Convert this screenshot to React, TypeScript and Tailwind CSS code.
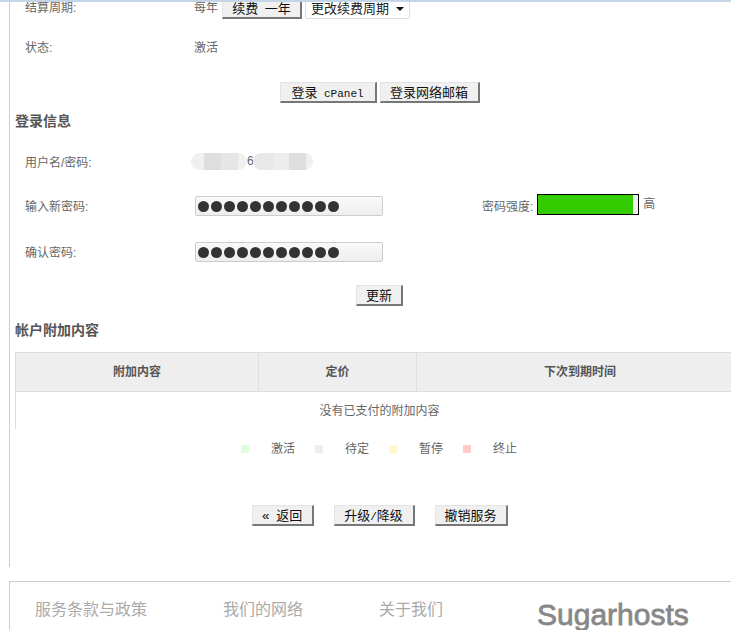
import React from "react";

const sans = "font-['Liberation_Sans','Noto_Sans_CJK_SC',sans-serif]";

const Btn: React.FC<{ className?: string; children: React.ReactNode }> = ({ className = "", children }) => (
  <button
    className={`h-[21px] shrink-0 pt-[2px] bg-[#f0f0f0] border-t border-l border-[#e4e4e4] border-r-2 border-b-2 border-r-[#777] border-b-[#777] text-[13px] leading-[18px] text-[#111] whitespace-pre font-['Liberation_Mono','Noto_Sans_CJK_SC',monospace] ${className}`}
  >
    {children}
  </button>
);

const Dots = () => (
  <div className="w-[188px] h-[20px] rounded-[2px] border border-[#ccc] bg-gradient-to-b from-[#fafafa] to-[#eeeeee] flex items-center gap-[2px] pl-[2px]">
    {Array.from({ length: 11 }).map((_, i) => (
      <span key={i} className="w-[11px] h-[11px] rounded-full bg-[#333]" />
    ))}
  </div>
);

const Legend: React.FC<{ color: string; label: string }> = ({ color, label }) => (
  <div className="flex items-center gap-[22px]">
    <span className={`w-2 h-2 ${color}`} />
    <span>{label}</span>
  </div>
);

export default function App() {
  return (
    <div className={`w-[731px] h-[630px] overflow-hidden bg-white text-[12px] text-[#666] ${sans}`}>
      <div className="h-[2px] bg-[#c5d5e8]" />
      <div className="ml-[9px] h-[565px] border-l border-[#ccc] overflow-hidden">
        <div className="flex items-center h-[21px] pl-[15px] -mt-[4px]">
          <span className="w-[169px] pb-[2px]">结算周期:</span>
          <span className="pb-[2px]">每年</span>
          <Btn className="ml-[4px] w-[80px]">
            续费<span className="text-[11px]"> </span>一年
          </Btn>
          <div className="ml-[3px] w-[105px] h-[21px] bg-white border border-[#ddd] rounded-[2px] flex items-center justify-between pl-[5px] pr-[5px] text-[13px] text-[#222]">
            <span>更改续费周期</span>
            <span className="w-0 h-0 border-x-[4px] border-x-transparent border-t-[4px] border-t-[#111]" />
          </div>
        </div>
        <div className="flex items-center h-[20px] pl-[15px] mt-[19px]">
          <span className="w-[169px]">状态:</span>
          <span>激活</span>
        </div>
        <div className="flex justify-center gap-[3px] mt-[24px] pl-[18px]">
          <Btn className="w-[97px]">
            登录<span className="text-[11px]"> cPanel</span>
          </Btn>
          <Btn className="w-[100px]">登录网络邮箱</Btn>
        </div>
        <h2 className="mt-[9px] pl-[5px] text-[14px] leading-[18px] font-bold text-[#555]">登录信息</h2>
        <div className="flex items-center h-[20px] pl-[15px] mt-[21px]">
          <span className="w-[166px] pt-[3px]">用户名/密码:</span>
          <span className="flex w-[56px] h-[17px] rounded-full overflow-hidden">
            <span className="w-[13px] bg-[#f0f0f0]" />
            <span className="w-[17px] bg-[#dedede]" />
            <span className="w-[17px] bg-[#e6e6e6]" />
            <span className="w-[9px] bg-[#f0f0f0]" />
          </span>
          <span className="w-[6px] overflow-hidden">6</span>
          <span className="flex w-[60px] h-[17px] rounded-full overflow-hidden">
            <span className="w-[20px] bg-[#e8e8e8]" />
            <span className="w-[16px] bg-[#ededed]" />
            <span className="w-[17px] bg-[#dedede]" />
            <span className="w-[7px] bg-[#f0f0f0]" />
          </span>
        </div>
        <div className="flex items-center h-[22px] pl-[15px] mt-[24px]">
          <span className="w-[170px] pt-[2px]">输入新密码:</span>
          <Dots />
          <span className="ml-[99px] pt-[2px]">密码强度:</span>
          <div className="ml-[4px] w-[102px] h-[21px] border border-black bg-[#eeeeee] -mt-[3px]">
            <div className="w-[95px] h-full bg-[#33cc00]" />
          </div>
          <span className="ml-[4px] -mt-[4px]">高</span>
        </div>
        <div className="flex items-center h-[22px] pl-[15px] mt-[24px]">
          <span className="w-[170px] pt-[2px]">确认密码:</span>
          <Dots />
        </div>
        <div className="flex justify-center mt-[22px] pl-[18px]">
          <Btn className="w-[47px]">更新</Btn>
        </div>
        <h2 className="mt-[15px] pl-[5px] text-[14px] leading-[18px] font-bold text-[#555]">帐户附加内容</h2>
        <div className="ml-[5px] mt-[13px] w-[728px] h-[77px] border-l border-[#ddd]">
          <div className="grid grid-cols-[243px_158px_1fr] h-[40px] bg-[#eeeeee] border-y border-[#ddd] font-bold text-[#555]">
            <div className="flex items-center justify-center border-r border-[#ddd]">附加内容</div>
            <div className="flex items-center justify-center border-r border-[#ddd]">定价</div>
            <div className="flex items-center justify-center">下次到期时间</div>
          </div>
          <div className="flex items-center justify-center h-[37px]">没有已支付的附加内容</div>
        </div>
        <div className="flex justify-center items-center h-[18px] mt-[11px] pl-[17px] gap-[20px]">
          <Legend color="bg-[#ddffdd]" label="激活" />
          <Legend color="bg-[#eeeeee]" label="待定" />
          <Legend color="bg-[#fff6cc]" label="暂停" />
          <Legend color="bg-[#ffcccc]" label="终止" />
        </div>
        <div className="flex justify-center gap-[20px] mt-[47px] pl-[18px]">
          <Btn className="w-[62px]">
            «<span className="text-[11px]"> </span>返回
          </Btn>
          <Btn className="w-[81px]">
            升级<span className="text-[11px]">/</span>降级
          </Btn>
          <Btn className="w-[73px]">撤销服务</Btn>
        </div>
      </div>
      <div className="ml-[9px] mt-[14px] border-t border-l border-[#ccc] h-[49px] flex items-start pl-[25px] pt-[17px] text-[16px] leading-[22px] text-[#aaa]">
        <span className="w-[188px]">服务条款与政策</span>
        <span className="w-[156px]">我们的网络</span>
        <span className="w-[158px]">关于我们</span>
        <span className="text-[30px] leading-[32px] text-[#888] [-webkit-text-stroke:0.8px_#888]">Sugarhosts</span>
      </div>
    </div>
  );
}
